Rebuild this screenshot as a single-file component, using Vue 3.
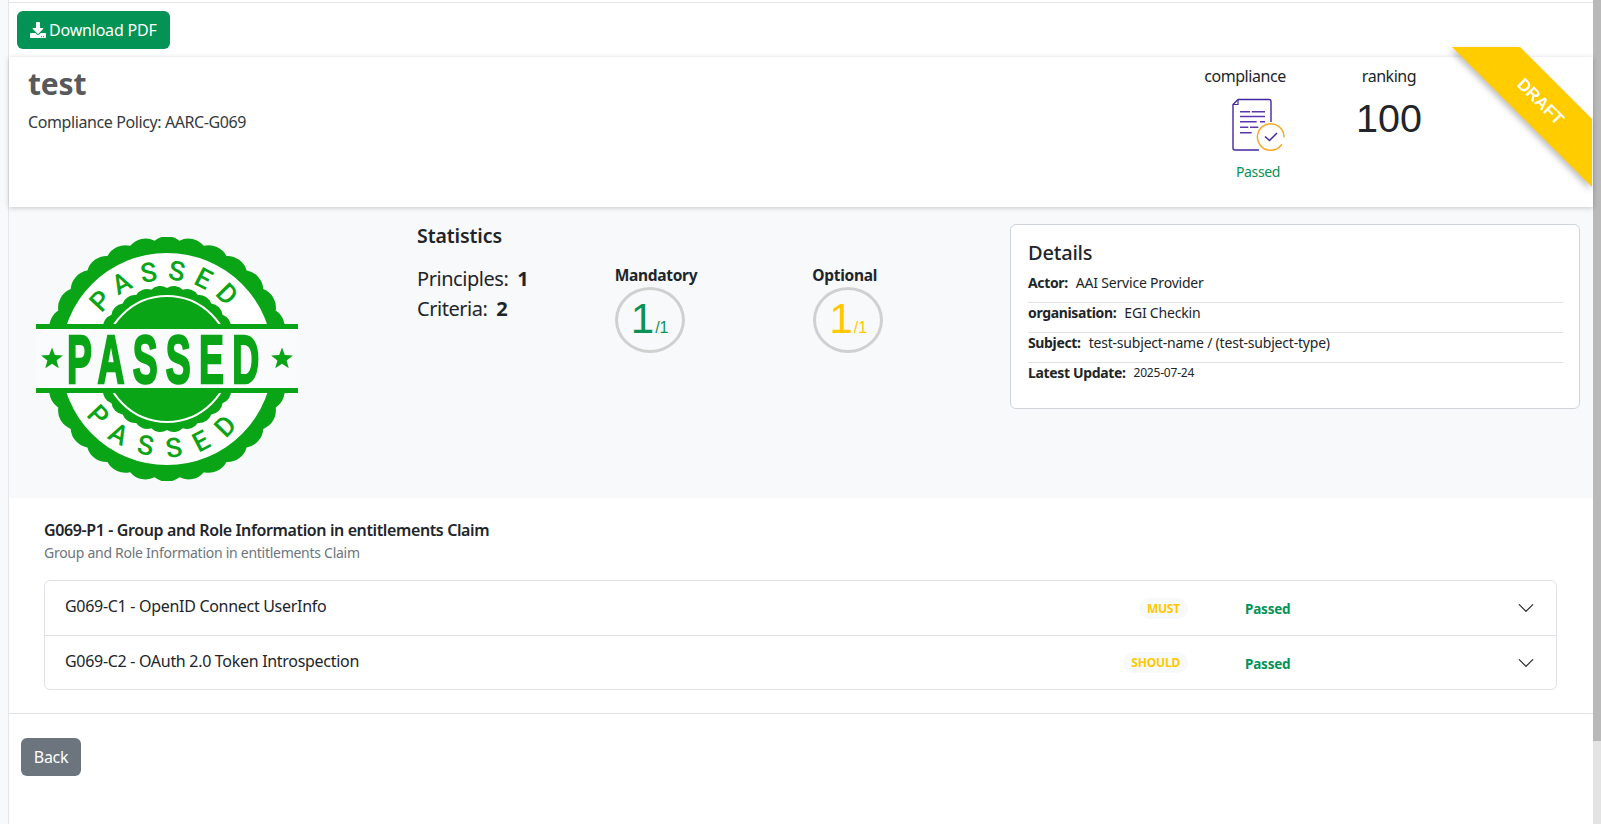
<script setup>
import { computed } from 'vue'

function scallop(cx, cy, r, bumps, bulge) {
  const pts = []
  for (let i = 0; i < bumps; i++) {
    const a = (i / bumps) * Math.PI * 2
    pts.push([cx + r * Math.cos(a), cy + r * Math.sin(a)])
  }
  const chord = 2 * r * Math.sin(Math.PI / bumps)
  const rad = (chord / 2) * bulge
  let d = `M${pts[0][0].toFixed(2)} ${pts[0][1].toFixed(2)}`
  for (let i = 1; i <= bumps; i++) {
    const p = pts[i % bumps]
    d += `A${rad.toFixed(2)} ${rad.toFixed(2)} 0 0 1 ${p[0].toFixed(2)} ${p[1].toFixed(2)}`
  }
  return d + 'Z'
}

function star(cx, cy, R) {
  const out = []
  for (let i = 0; i < 10; i++) {
    const a = -Math.PI / 2 + (i * Math.PI) / 5
    const rr = i % 2 ? R * 0.42 : R
    out.push(`${(cx + rr * Math.cos(a)).toFixed(2)},${(cy + rr * Math.sin(a)).toFixed(2)}`)
  }
  return out.join(' ')
}

const outerPath = computed(() => scallop(131, 122, 119, 30, 1.6))
const innerPath = computed(() => scallop(131, 122, 71, 28, 1.6))
const starLeft = computed(() => star(16, 122, 11.5))
const starRight = computed(() => star(246, 122, 11.5))

const details = [
  { label: 'Actor:', value: 'AAI Service Provider' },
  { label: 'organisation:', value: 'EGI Checkin' },
  { label: 'Subject:', value: 'test-subject-name / (test-subject-type)' },
  { label: 'Latest Update:', value: '2025-07-24', small: true }
]

const gauges = [
  { title: 'Mandatory', cls: 'green' },
  { title: 'Optional', cls: 'yellow' }
]

const criteria = [
  { name: 'G069-C1 - OpenID Connect UserInfo', level: 'MUST' },
  { name: 'G069-C2 - OAuth 2.0 Token Introspection', level: 'SHOULD' }
]
</script>

<template>
  <div class="shell">
    <div class="gutter"></div>
    <main class="main">
      <div class="toolbar">
        <button class="btn btn-pdf">
          <svg class="dl" viewBox="0 0 512 512"><path fill="#fff" d="M216 0h80c13.3 0 24 10.7 24 24v168h87.7c17.8 0 26.7 21.5 14.1 34.1L269.7 378.3c-7.5 7.5-19.8 7.5-27.3 0L90.1 226.1c-12.6-12.6-3.7-34.1 14.1-34.1H192V24c0-13.3 10.7-24 24-24zm296 376v112c0 13.3-10.7 24-24 24H24c-13.3 0-24-10.7-24-24V376c0-13.3 10.7-24 24-24h146.7l49 49c20.1 20.1 52.5 20.1 72.6 0l49-49H488c13.3 0 24 10.7 24 24zm-124 88c0-11-9-20-20-20s-20 9-20 20 9 20 20 20 20-9 20-20zm64 0c0-11-9-20-20-20s-20 9-20 20 9 20 20 20 20-9 20-20z"/></svg>
          <span>Download PDF</span>
        </button>
      </div>

      <section class="head-card">
        <div class="head-left">
          <h1>test</h1>
          <p>Compliance Policy: AARC-G069</p>
        </div>
        <div class="head-stat compliance">
          <div class="stat-label">compliance</div>
          <svg class="doc" viewBox="0 0 56 56" fill="none">
            <path d="M8 3.5H39a2 2 0 0 1 2 2V26M29 54H5a2 2 0 0 1-2-2V8.5L8 3.5" stroke="#4527a0" stroke-width="1.4" stroke-linejoin="round"/>
            <path d="M8 3.5V8.5H3" stroke="#4527a0" stroke-width="1.2"/>
            <path d="M10 15.7H20M21.7 15.7H35M10 20.5H35M10 25.7H26.7M30 25.7H35M10 31.3H18.3M20 31.3H28.3M10 36.7H21.7" stroke="#5e35b1" stroke-width="1.5"/>
            <path d="M54 40.7A13.3 13.3 0 1 0 51.5 48.8" stroke="#f9a825" stroke-width="1.5" stroke-linecap="round"/>
            <path d="M35 40.5L39.5 44.5L47 37" stroke="#4527a0" stroke-width="1.5"/>
          </svg>
          <div class="passed-text">Passed</div>
        </div>
        <div class="head-stat ranking">
          <div class="stat-label">ranking</div>
          <div class="rank-value">100</div>
        </div>
        <div class="ribbon"><div class="ribbon-fill"><span>DRAFT</span></div></div>
      </section>

      <section class="summary">
        <div class="stamp-col">
          <svg class="stamp" viewBox="0 0 262 244">
            <defs>
              <path id="arcTop" d="M52 122A79 79 0 0 1 210 122"/>
              <path id="arcBottom" d="M33 122A98 98 0 0 0 229 122"/>
            </defs>
            <path :d="outerPath" fill="#0aa516"/>
            <circle cx="131" cy="122" r="106" fill="#fff"/>
            <path :d="innerPath" fill="#0aa516"/>
            <circle cx="131" cy="122" r="63" fill="none" stroke="#fff" stroke-width="2"/>
            <rect x="0" y="92" width="262" height="60" fill="#fafbfc"/>
            <rect x="0" y="87" width="262" height="5" fill="#0aa516"/>
            <rect x="0" y="151" width="262" height="5" fill="#0aa516"/>
            <text class="stamp-curve" fill="#0aa516" letter-spacing="9" text-anchor="middle"><textPath href="#arcTop" startOffset="50%">PASSED</textPath></text>
            <text class="stamp-curve" fill="#0aa516" letter-spacing="15" text-anchor="middle"><textPath href="#arcBottom" startOffset="50%">PASSED</textPath></text>
            <text class="stamp-main" transform="translate(31 146) scale(.55 1)" fill="#0aa516" stroke="#0aa516" stroke-width="2.5" letter-spacing="15">PASSED</text>
            <polygon fill="#0aa516" :points="starLeft"/>
            <polygon fill="#0aa516" :points="starRight"/>
          </svg>
        </div>

        <div class="stats-col">
          <h2>Statistics</h2>
          <div class="stats-body">
            <div class="counts">
              <div>Principles: <b>1</b></div>
              <div>Criteria: <b>2</b></div>
            </div>
            <div v-for="g in gauges" :key="g.title" class="gauge">
              <div class="gauge-title">{{ g.title }}</div>
              <div class="gauge-ring" :class="g.cls">
                <span class="big">1</span><span class="small">/1</span>
              </div>
            </div>
          </div>
        </div>

        <div class="details">
          <h3>Details</h3>
          <div class="detail-rows">
            <div v-for="d in details" :key="d.label" class="detail-row">
              <b>{{ d.label }}</b>
              <span :class="{ tiny: d.small }">{{ d.value }}</span>
            </div>
          </div>
        </div>
      </section>

      <section class="principle">
        <div class="p-title">G069-P1 - Group and Role Information in entitlements Claim</div>
        <div class="p-sub">Group and Role Information in entitlements Claim</div>
        <div class="list">
          <div v-for="c in criteria" :key="c.name" class="item">
            <span class="item-name">{{ c.name }}</span>
            <span class="badge">{{ c.level }}</span>
            <span class="item-status">Passed</span>
            <svg class="chev" viewBox="0 0 16 16"><path fill="#212529" fill-rule="evenodd" d="M1.646 4.646a.5.5 0 0 1 .708 0L8 10.293l5.646-5.647a.5.5 0 0 1 .708.708l-6 6a.5.5 0 0 1-.708 0l-6-6a.5.5 0 0 1 0-.708z"/></svg>
          </div>
        </div>
      </section>

      <div class="footer">
        <button class="btn btn-back">Back</button>
      </div>
    </main>
    <div class="scrollbar"><div class="thumb"></div></div>
  </div>
</template>

<style>
html, body { margin: 0; padding: 0; background: #fff; overflow: hidden; }
</style>

<style scoped>
.shell {
  display: flex;
  width: 1601px;
  height: 824px;
  overflow: hidden;
  font-family: "Noto Sans", sans-serif;
  color: #212529;
  background: #fff;
}
.gutter {
  width: 8px;
  flex: none;
  background: #f8f9fa;
  border-right: 1px solid #e4e6e9;
}
.main {
  flex: 1;
  min-width: 0;
  position: relative;
  border-top: 1px solid #e4e6e9;
  margin-top: 2px;
}
.scrollbar {
  width: 8px;
  flex: none;
  background: #e3e3e3;
}
.thumb {
  height: 741px;
  background: #b9b9b9;
}
.toolbar {
  height: 54px;
  box-sizing: border-box;
  padding: 8px 0 0 8px;
}
.btn {
  border: 1px solid transparent;
  border-radius: 6px;
  color: #fff;
  font-family: inherit;
  font-size: 16px;
  line-height: 24px;
  padding: 6px 12px;
  height: 38px;
  box-sizing: border-box;
}
.btn-pdf {
  background: #039355;
  display: flex;
  align-items: center;
  gap: 3px;
  width: 153px;
  letter-spacing: -.2px;
  white-space: nowrap;
}
.dl { width: 16px; height: 16px; flex: none; }
.head-card {
  position: relative;
  z-index: 1;
  height: 150px;
  box-sizing: border-box;
  display: flex;
  background: #fff;
  box-shadow: 0 1px 5px rgba(0,0,0,.2);
  padding-left: 19px;
}
.head-left { flex: 1; }
h1 {
  margin: 10px 0 0;
  font-size: 30px;
  line-height: 34px;
  font-weight: 700;
  color: #58595b;
  letter-spacing: -.2px;
}
.head-left p {
  margin: 9px 0 0;
  font-size: 16px;
  line-height: 24px;
  color: #343a40;
  letter-spacing: -.4px;
}
.head-stat { text-align: center; }
.stat-label {
  font-size: 16px;
  line-height: 24px;
  letter-spacing: -.45px;
}
.compliance {
  width: 101px;
  padding-top: 7px;
  margin-right: 48.5px;
  display: flex;
  flex-direction: column;
  align-items: center;
}
.compliance .stat-label { white-space: nowrap; }
.doc { width: 56px; height: 56px; margin-top: 8px; margin-left: 26px; flex: none; }
.passed-text {
  margin-top: 10px;
  margin-left: 26px;
  font-size: 14px;
  line-height: 20px;
  color: #039355;
  letter-spacing: -.35px;
}
.ranking {
  width: 90px;
  padding-top: 7px;
  margin-right: 159px;
}
.rank-value {
  font-family: "Liberation Sans", sans-serif;
  font-size: 39.5px;
  line-height: 46px;
  margin-top: 7px;
}
.ribbon {
  position: absolute;
  right: 1px;
  top: -10px;
  width: 140px;
  height: 140px;
  filter: drop-shadow(-2px 3px 3px rgba(0,0,0,.25));
}
.ribbon-fill {
  position: absolute;
  inset: 0;
  background: #ffcc00;
  clip-path: polygon(0 0, 68px 0, 100% 72px, 100% 100%);
}
.ribbon-fill span {
  position: absolute;
  left: 53px;
  top: 44px;
  width: 70px;
  text-align: center;
  color: #fff;
  font-size: 17px;
  font-weight: 700;
  line-height: 22px;
  transform: rotate(45deg);
  font-family: "Liberation Sans", sans-serif;
}
.summary {
  height: 291px;
  box-sizing: border-box;
  background: #f8f9fa;
  display: flex;
  padding-top: 17px;
}
.stamp-col { width: 408px; flex: none; padding: 13px 0 0 27px; box-sizing: border-box; }
.stamp { width: 262px; height: 244px; display: block; }
.stamp-curve {
  font-family: Roboto, sans-serif;
  font-weight: 500;
  font-size: 27px;
}
.stamp-main {
  font-family: "Liberation Sans", sans-serif;
  font-weight: 700;
  font-size: 68px;
}
.stats-col { width: 593px; flex: none; }
h2 {
  margin: 0;
  font-size: 19.5px;
  line-height: 24px;
  font-weight: 600;
  letter-spacing: -.1px;
}
.stats-body { display: flex; margin-top: 16px; }
.counts {
  width: 198px;
  font-size: 20px;
  line-height: 30px;
  letter-spacing: -.45px;
}
.counts b { margin-left: 4px; font-weight: 700; }
.gauge { width: 198px; }
.gauge-title {
  font-size: 15.5px;
  line-height: 22px;
  font-weight: 700;
  letter-spacing: -.3px;
}
.gauge-ring {
  width: 70px;
  height: 66px;
  box-sizing: border-box;
  border: 3px solid #d0d0d0;
  border-radius: 50%;
  margin-top: 1px;
  display: flex;
  align-items: baseline;
  justify-content: center;
  font-family: "Liberation Sans", sans-serif;
  line-height: 58px;
}
.gauge + .gauge .gauge-ring { margin-left: 1px; }
.gauge-ring.green { color: #0d9157; }
.gauge-ring.yellow { color: #ffc800; }
.big { font-size: 42px; }
.small { font-size: 16px; margin-left: 1px; }
.details {
  width: 570px;
  height: 185px;
  box-sizing: border-box;
  background: #fff;
  border: 1px solid #ced4da;
  border-radius: 6px;
  padding: 14px 16px 0 17px;
}
h3 {
  margin: 0;
  font-size: 20px;
  line-height: 28px;
  font-weight: 500;
  letter-spacing: -.2px;
}
.detail-rows { margin-top: 6px; }
.detail-row {
  display: flex;
  gap: 8px;
  height: 30px;
  box-sizing: border-box;
  font-size: 14px;
  line-height: 19px;
  border-bottom: 1px solid #dee2e6;
  letter-spacing: -.2px;
}
.detail-row:last-child { border-bottom: 0; }
.detail-row b { font-weight: 700; font-size: 14px; letter-spacing: -.35px; }
.tiny { font-size: 12px; }
.principle {
  height: 216px;
  box-sizing: border-box;
  padding: 21px 35px 0 35px;
  border-bottom: 1px solid #dee2e6;
}
.p-title {
  font-size: 16px;
  line-height: 22px;
  font-weight: 600;
  letter-spacing: -.38px;
}
.p-sub {
  font-size: 14px;
  line-height: 20px;
  margin-top: 2px;
  color: #6c757d;
  letter-spacing: -.27px;
}
.list {
  margin-top: 17px;
  border: 1px solid #dee2e6;
  border-radius: 6px;
  width: 1513px;
  box-sizing: border-box;
}
.item {
  display: flex;
  align-items: center;
  height: 54px;
  padding-left: 20px;
  box-sizing: border-box;
}
.item + .item { border-top: 1px solid #dee2e6; }
.item-name {
  flex: 1;
  font-size: 16px;
  letter-spacing: -.3px;
  padding-bottom: 4px;
}
.badge {
  font-size: 12px;
  line-height: 21px;
  height: 21px;
  padding: 0 8px;
  border-radius: 11px;
  background: #f8f9fa;
  color: #ffc800;
  font-weight: 700;
  letter-spacing: -.2px;
}
.item-status {
  width: 46px;
  margin-left: 57px;
  padding-top: 2px;
  font-size: 13.5px;
  font-weight: 700;
  color: #039355;
  letter-spacing: -.2px;
}
.chev { width: 18px; height: 18px; margin-left: 226px; margin-right: 21px; flex: none; }
.footer { padding: 24px 0 0 12px; }
.btn-back {
  background: #6c757d;
  width: 60px;
  padding: 6px 0;
  letter-spacing: -.3px;
}
</style>
